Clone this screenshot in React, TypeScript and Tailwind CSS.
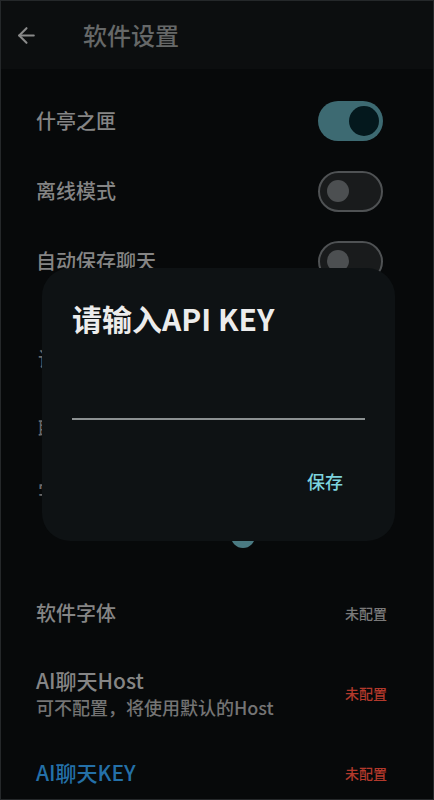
import { ArrowLeft } from "lucide-react";

const font = { fontFamily: '"Noto Sans CJK SC", "Noto Sans", sans-serif' };

function Toggle({ on }: { on: boolean }) {
  if (on) {
    return (
      <div className="flex h-[40px] w-[65px] items-center justify-end rounded-full bg-[#3d6a72] pr-[4px]">
        <div className="h-[30px] w-[30px] rounded-full bg-[#04181d]" />
      </div>
    );
  }
  return (
    <div className="flex h-[41px] w-[65px] items-center rounded-full border-2 border-[#4f5254] bg-[#191b1c] pl-[7px]">
      <div className="h-[22px] w-[22px] rounded-full bg-[#4c4f51]" />
    </div>
  );
}

function SwitchRow({ label, on }: { label: string; on: boolean }) {
  return (
    <div className="flex h-[70px] items-center justify-between pl-[35px] pr-[50px]">
      <span className="text-[20px] font-medium text-[#858585]">{label}</span>
      <Toggle on={on} />
    </div>
  );
}

export default function App() {
  return (
    <div style={font} className="relative h-[800px] w-[434px] overflow-hidden border border-[#25282a] bg-[#07090a]">
      {/* top bar */}
      <div className="flex h-[68px] items-center bg-[#0c0e0f]">
        <ArrowLeft className="ml-[13px] text-[#8a8a8a]" size={25} strokeWidth={2} />
        <span className="ml-[44px] text-[24px] font-medium text-[#666868]">软件设置</span>
      </div>

      <div className="pt-[17px]">
        <SwitchRow label="什亭之匣" on />
        <SwitchRow label="离线模式" on={false} />
        <SwitchRow label="自动保存聊天" on={false} />

        <div className="mt-[28px] flex h-[70px] items-center pl-[37px]">
          <span className="text-[20px] font-medium text-[#6a6a6a]">语音朗读</span>
        </div>
        <div className="flex h-[70px] items-center pl-[37px]">
          <span className="text-[20px] font-medium text-[#6a6a6a]">聊天气泡</span>
        </div>
        <div className="flex h-[56px] items-center pl-[37px]">
          <span className="text-[20px] font-medium text-[#6a6a6a]">字体大小</span>
        </div>

        {/* slider, mostly under the dialog */}
        <div className="relative h-[39px]">
          <div className="absolute left-[230px] top-[4px] h-[24px] w-[24px] rounded-full bg-[#4a7a82]" />
        </div>

        <div className="mt-[19px] flex h-[70px] items-center justify-between pl-[35px] pr-[46px]">
          <span className="text-[20px] font-medium text-[#858585]">软件字体</span>
          <span className="text-[14px] font-medium text-[#7a7a7a]">未配置</span>
        </div>

        <div className="flex h-[90px] items-center justify-between pl-[35px] pr-[46px]">
          <div className="flex flex-col">
            <span className="text-[21px] font-medium leading-[28px] text-[#858585]">AI聊天Host</span>
            <span className="text-[18px] font-medium leading-[26px] text-[#747474]">可不配置，将使用默认的Host</span>
          </div>
          <span className="text-[14px] font-medium text-[#b3392c]">未配置</span>
        </div>

        <div className="flex h-[70px] items-center justify-between pl-[35px] pr-[46px]">
          <span className="text-[21px] font-medium text-[#2470a8]">AI聊天KEY</span>
          <span className="text-[14px] font-medium text-[#b3392c]">未配置</span>
        </div>
      </div>

      {/* api key dialog */}
      <div className="absolute left-[41px] top-[267px] flex h-[273px] w-[353px] flex-col rounded-[28px] bg-[#0e1214] pl-[30px] pr-[30px] pt-[30px]">
        <h2 className="text-[30px] font-bold leading-[40px] text-[#ececec]">请输入API KEY</h2>
        <div className="mt-[80px] h-[2px] bg-[#8c9192]" />
        <div className="mt-[48px] flex justify-end pr-[22px]">
          <span className="text-[18px] font-medium leading-[26px] text-[#7dd3de]">保存</span>
        </div>
      </div>
    </div>
  );
}
